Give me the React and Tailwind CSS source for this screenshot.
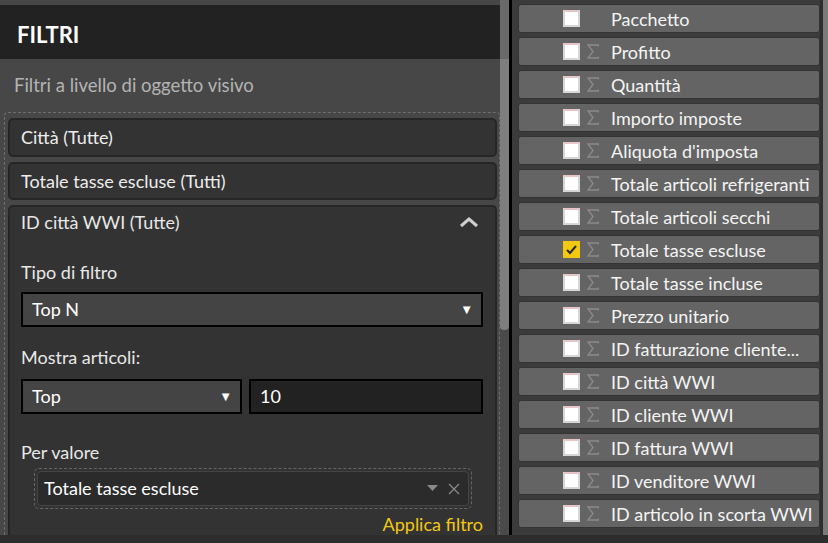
import React from "react";

const fields = [
  { name: "Pacchetto", sigma: false },
  { name: "Profitto" },
  { name: "Quantità" },
  { name: "Importo imposte" },
  { name: "Aliquota d'imposta" },
  { name: "Totale articoli refrigeranti" },
  { name: "Totale articoli secchi" },
  { name: "Totale tasse escluse", checked: true },
  { name: "Totale tasse incluse" },
  { name: "Prezzo unitario" },
  { name: "ID fatturazione cliente..." },
  { name: "ID città WWI" },
  { name: "ID cliente WWI" },
  { name: "ID fattura WWI" },
  { name: "ID venditore WWI" },
  { name: "ID articolo in scorta WWI" },
];

function Checkbox({ checked }) {
  if (checked) {
    return (
      <div className="w-[17px] h-[17px] shrink-0 bg-[#f2c811] flex items-center justify-center">
        <svg width="13" height="13" viewBox="0 0 13 13">
          <polyline points="2,7 5,10 11,3" fill="none" stroke="#2a2a2a" strokeWidth="2" />
        </svg>
      </div>
    );
  }
  return <div className="w-[17px] h-[17px] shrink-0 bg-white border-[2px] border-[#d6d6d6] border-t-[#e8c4c4]" />;
}

function SigmaIcon() {
  return (
    <svg width="12" height="15" viewBox="0 0 12 15">
      <polyline
        points="11.5,2.5 11.5,1 1,1 6,7.5 1,14 11.5,14 11.5,12.5"
        fill="none"
        stroke="#8a8a8a"
        strokeWidth="1.4"
        strokeLinejoin="miter"
      />
    </svg>
  );
}

function FieldRow({ f }) {
  return (
    <div className="h-[29px] shrink-0 rounded-[3px] bg-[#646464] border border-[#333] flex items-center pl-[44px] text-[18px] text-[#f4f4f4] leading-none">
      <Checkbox checked={f.checked} />
      <div className="w-[31px] shrink-0 pl-[7px] flex items-center">
        {f.sigma === false ? null : <SigmaIcon />}
      </div>
      <span className="whitespace-nowrap">{f.name}</span>
    </div>
  );
}

function Card({ children, className = "" }) {
  return (
    <div className={"shrink-0 bg-[#333333] border-2 border-[#262626] rounded-[5px] " + className}>{children}</div>
  );
}

export default function App() {
  return (
    <div className="w-[828px] h-[543px] flex flex-col overflow-hidden bg-[#2d2d2d] font-['Lato',sans-serif]">
      <div className="h-[535px] flex">
        {/* Left panel */}
        <div className="w-[500px] h-full flex flex-col">
          <div className="h-[5px] bg-[#474747] shrink-0" />
          <div className="h-[54px] shrink-0 bg-[#222222] flex items-center pl-[17px] pt-[5px] text-white font-bold text-[22px]">
            FILTRI
          </div>
          <div className="flex-1 bg-[#474747] flex flex-col min-h-0">
            <div className="h-[53px] shrink-0 flex items-center pl-[14px] text-[#b4b4b4] text-[18.5px]">
              Filtri a livello di oggetto visivo
            </div>
            <div className="flex-1 ml-[4px] border border-dashed border-[#6e6e6e] border-b-0 rounded-t-[4px] pl-[3px] pr-[2px] pt-[5px] flex flex-col gap-[5px] min-h-0 overflow-hidden">
              <Card className="h-[39px] flex items-center pl-[11px] text-[18px] text-[#ededed]">Città (Tutte)</Card>
              <Card className="h-[38px] flex items-center pl-[11px] text-[18px] text-[#ededed]">
                Totale tasse escluse (Tutti)
              </Card>
              <Card className="flex-1 border-b-0 rounded-b-none pl-[11px] pr-[12px] text-[#e8e8e8] text-[18px]">
                <div className="h-[30px] flex items-center justify-between">
                  <span>ID città WWI (Tutte)</span>
                  <svg width="20" height="12" viewBox="0 0 20 12" className="mr-[4px]">
                    <polyline points="2,10 10,3 18,10" fill="none" stroke="#cfcfcf" strokeWidth="3" />
                  </svg>
                </div>
                <div className="mt-[23px] h-[24px] flex items-center">Tipo di filtro</div>
                <div className="mt-[8px] h-[35px] bg-[#444444] border-2 border-black flex items-center justify-between pl-[9px] pr-[8px] text-white">
                  <span>Top N</span>
                  <span className="text-[13px]">▼</span>
                </div>
                <div className="mt-[18px] h-[24px] flex items-center">Mostra articoli:</div>
                <div className="mt-[10px] h-[35px] flex gap-[7px]">
                  <div className="w-[221px] bg-[#444444] border-2 border-black flex items-center justify-between pl-[9px] pr-[8px] text-white">
                    <span>Top</span>
                    <span className="text-[13px]">▼</span>
                  </div>
                  <div className="flex-1 bg-[#222222] border-2 border-black flex items-center pl-[9px] text-white">10</div>
                </div>
                <div className="mt-[26px] h-[24px] flex items-center">Per valore</div>
                <div className="mt-[4px] ml-[13px] mr-[11px] h-[41px] border border-dashed border-[#666] rounded-[5px] p-[2px]">
                  <div className="h-full bg-[#2b2b2b] border border-[#444] rounded-[4px] flex items-center justify-between pl-[6px] pr-[8px] text-white">
                    <span>Totale tasse escluse</span>
                    <div className="flex items-center gap-[10px]">
                      <svg width="11" height="7" viewBox="0 0 11 7">
                        <polygon points="0,0 11,0 5.5,6" fill="#8a8a8a" />
                      </svg>
                      <svg width="12" height="12" viewBox="0 0 12 12">
                        <path d="M1 1 L11 11 M11 1 L1 11" stroke="#8a8a8a" strokeWidth="1.3" />
                      </svg>
                    </div>
                  </div>
                </div>
                <div className="mt-[6px] h-[19px] leading-[19px] flex items-center justify-end text-[#f2c811]">
                  Applica filtro
                </div>
              </Card>
            </div>
          </div>
        </div>
        {/* Left scrollbar */}
        <div className="w-[9px] h-full bg-[#4a4a4a] flex flex-col">
          <div className="h-[59px] bg-[#6a6a6a]" />
          <div className="h-[271px] bg-[#7e7e7e] rounded-b-[4px]" />
        </div>
        <div className="w-[3px] h-full bg-black" />
        {/* Right panel */}
        <div className="flex-1 h-full bg-[#3b3b3b] flex">
          <div className="flex-1 pl-[6px] pt-[4px] flex flex-col gap-[4px] overflow-hidden">
            {fields.map((f) => (
              <FieldRow key={f.name} f={f} />
            ))}
          </div>
          <div className="w-[3px] bg-[#2e2e2e]" />
          <div className="w-[5px] bg-[#7a7a7a]" />
        </div>
      </div>
      <div className="h-[8px] bg-[#2d2d2d]" />
    </div>
  );
}
